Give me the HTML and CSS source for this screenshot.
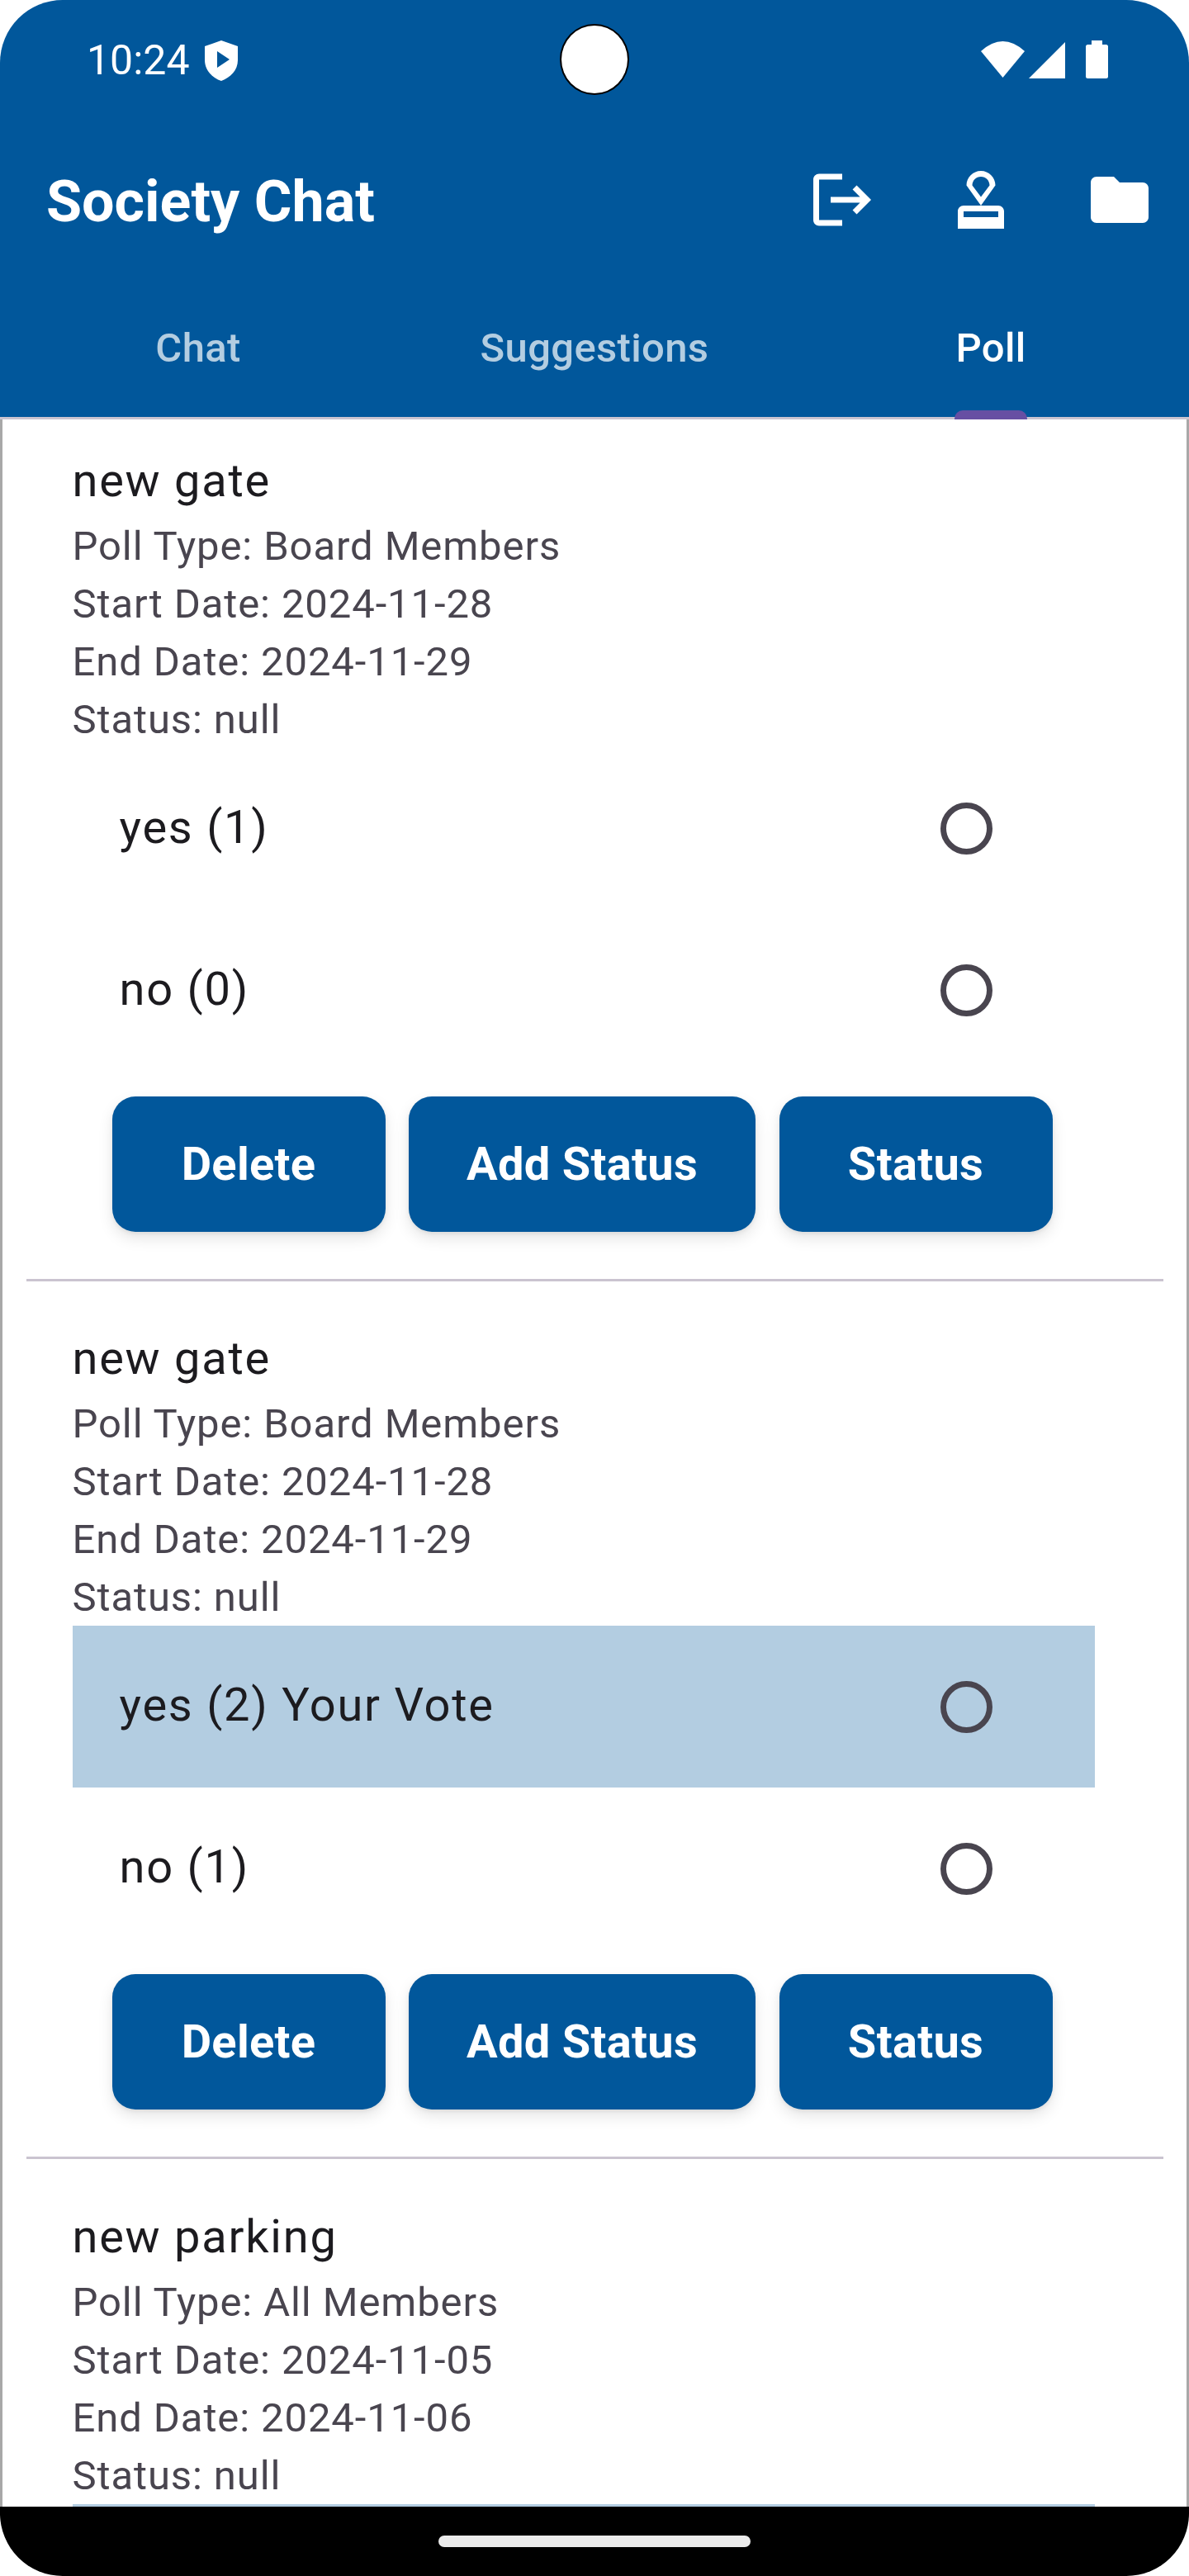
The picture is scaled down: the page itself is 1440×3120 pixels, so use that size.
FILE: index.html
```html
<!DOCTYPE html>
<html lang="en">
<head>
<meta charset="utf-8">
<title>Society Chat</title>
<link rel="stylesheet" href="styles.css">
</head>
<body>
<div class="screen">
  <header class="header">
    <div class="status">
      <div class="status-left">
        <span class="time">10:24</span>
        <svg class="shield" viewBox="0 0 40 49"><path fill-rule="evenodd" d="M20 0L40 7V24C40 36 31 45 20 49C9 45 0 36 0 24V7ZM15 13V33L30 23Z"/></svg>
      </div>
      <div class="status-right">
        <svg class="wifi" viewBox="0 0 53 44"><path d="M0 12Q26.5-12 53 12L26.5 44Z"/></svg>
        <svg class="signal" viewBox="0 0 44 44"><path d="M44 0V44H0Z"/></svg>
        <svg class="battery" viewBox="0 0 27 46"><path d="M7 0H20V5H24.5Q27 5 27 7.500V43.500Q27 46 24.500 46H2.500Q0 46 0 43.500V7.500Q0 5 2.500 5H7Z"/></svg>
      </div>
      <div class="camera"></div>
    </div>
    <div class="appbar">
      <h1 class="title">Society Chat</h1>
      <div class="actions">
        <span class="action"><svg class="icon" viewBox="0 0 24 24"><path d="M17 7l-1.410 1.410L18.170 11H8v2h10.170l-2.580 2.580L17 17l5-5zM4 5h8V3H4c-1.100 0-2 .9-2 2v14c0 1.100.9 2 2 2h8v-2H4V5z"/></svg></span>
        <span class="action"><svg class="icon" viewBox="0 0 24 24"><path d="M4 16v6h16v-6c0-1.100-.9-2-2-2H6c-1.100 0-2 .9-2 2zm14 2H6v-2h12v2zM12 2C9.240 2 7 4.240 7 7l5 7 5-7c0-2.760-2.240-5-5-5zm0 9L9 7c0-1.660 1.340-3 3-3s3 1.340 3 3l-3 4z"/></svg></span>
        <span class="action"><svg class="icon" viewBox="0 0 24 24"><path d="M10 4H4c-1.100 0-1.990.9-1.990 2L2 18c0 1.100.9 2 2 2h16c1.100 0 2-.9 2-2V8c0-1.100-.9-2-2-2h-8l-2-2z"/></svg></span>
      </div>
    </div>
    <nav class="tabs">
      <div class="tab">Chat</div>
      <div class="tab">Suggestions</div>
      <div class="tab tab-active"><span class="tab-label">Poll<span class="indicator"></span></span></div>
    </nav>
  </header>

  <main class="list">
    <section class="poll">
      <h2 class="poll-title">new gate</h2>
      <p class="meta">Poll Type: Board Members</p>
      <p class="meta">Start Date: 2024-11-28</p>
      <p class="meta">End Date: 2024-11-29</p>
      <p class="meta">Status: null</p>
      <div class="option"><span class="option-label">yes (1)</span><span class="radio"></span></div>
      <div class="option"><span class="option-label">no (0)</span><span class="radio"></span></div>
      <div class="buttons">
        <button class="btn">Delete</button>
        <button class="btn btn-tight">Add Status</button>
        <button class="btn">Status</button>
      </div>
    </section>

    <section class="poll">
      <h2 class="poll-title">new gate</h2>
      <p class="meta">Poll Type: Board Members</p>
      <p class="meta">Start Date: 2024-11-28</p>
      <p class="meta">End Date: 2024-11-29</p>
      <p class="meta">Status: null</p>
      <div class="option option-voted"><span class="option-label">yes (2) Your Vote</span><span class="radio"></span></div>
      <div class="option"><span class="option-label">no (1)</span><span class="radio"></span></div>
      <div class="buttons">
        <button class="btn">Delete</button>
        <button class="btn btn-tight">Add Status</button>
        <button class="btn">Status</button>
      </div>
    </section>

    <section class="poll">
      <h2 class="poll-title">new parking</h2>
      <p class="meta">Poll Type: All Members</p>
      <p class="meta">Start Date: 2024-11-05</p>
      <p class="meta">End Date: 2024-11-06</p>
      <p class="meta">Status: null</p>
      <div class="option option-voted"></div>
    </section>
  </main>

  <footer class="navbar"><span class="pill"></span></footer>
</div>
</body>
</html>
```

FILE: styles.css
```css
* { box-sizing: border-box; }
html, body { margin: 0; padding: 0; background: #fff; }
body { width: 1440px; height: 3120px; overflow: hidden; font-family: Roboto, "Liberation Sans", sans-serif; }

.screen {
  width: 1440px; height: 3120px; border-radius: 76px; overflow: hidden;
  display: flex; flex-direction: column; background: #fff;
}

.header { flex: none; background: #01579b; color: #fff; }

.status {
  position: relative; height: 130px; padding: 49px 98px 0 105px;
  display: flex; justify-content: space-between; align-items: flex-start;
}
.status-left { display: flex; align-items: flex-start; gap: 18px; }
.time { font-size: 50px; line-height: 44px; height: 44px; padding-top: 2px; }
.status-right { display: flex; align-items: flex-start; }
.status svg { display: block; fill: #fff; }
.shield { width: 40px; height: 49px; }
.wifi { width: 53px; height: 44px; margin-top: 1px; }
.signal { width: 44px; height: 44px; margin: 2px 0 0 5px; }
.battery { width: 27px; height: 46px; margin-left: 25px; }
.camera {
  position: absolute; left: 678px; top: 29px; width: 84px; height: 86px;
  border-radius: 50%; background: #fff; border: 2px solid #000;
}

.appbar { display: flex; align-items: center; height: 224px; }
.title { flex: 1; margin: 0; padding: 3px 0 0 56px; font-size: 70px; font-weight: 700; line-height: 1; }
.actions { display: flex; }
.action { width: 168px; height: 168px; display: flex; align-items: center; justify-content: center; }
.icon { width: 84px; height: 84px; fill: #fff; display: block; }

.tabs { display: flex; height: 153.5px; border-bottom: 3.5px solid #cac4d0; }
.tab {
  flex: 1; display: flex; align-items: flex-start; justify-content: center;
  padding-top: 39px; font-size: 49px; line-height: 58px; font-weight: 500; letter-spacing: .35px; color: #b3cde1;
}
.tab-active { color: #fff; }
.tab-label { position: relative; height: 100%; }
.indicator {
  position: absolute; left: -1px; right: -1px; top: 104px; height: 10.5px;
  background: #674fa3; border-radius: 10px 10px 0 0;
}

.list {
  flex: 1; min-height: 0; overflow: hidden;
  border-left: 3.5px solid #a8a8a8; border-right: 3.5px solid #a8a8a8;
}

.poll {
  margin: 0 28.5px 19.5px; padding: 32px 83px 57px 56px;
  border-bottom: 3.5px solid #cac4d0;
}
.poll-title {
  margin: 0 0 3px; font-size: 56px; line-height: 84px; font-weight: 400;
  letter-spacing: 1.75px; color: #1c1b1f;
}
.meta {
  margin: 0; font-size: 49px; line-height: 70px; letter-spacing: .9px; color: #49454f;
}
.meta:last-of-type { margin-bottom: -1px; }

.option { height: 196px; display: flex; align-items: center; justify-content: space-between; padding: 0 123.5px 0 57px; }
.option-voted { background: #b3cde1; }
.option-label { font-size: 56px; line-height: 84px; letter-spacing: 1.75px; color: #1c1b1f; padding-bottom: 4px; }
.radio { width: 63px; height: 63px; border-radius: 50%; border: 7px solid #49454f; }

.buttons { display: flex; justify-content: center; gap: 28.5px; margin-top: 30px; padding-right: 3px; }
.btn {
  height: 164px; width: 331px; padding: 0; border: 0; border-radius: 28px; background: #01579b; color: #fff;
  font-family: Roboto, "Liberation Sans", sans-serif; font-size: 56px; font-weight: 700; letter-spacing: .3px;
  box-shadow: 0 8px 18px rgba(0,0,0,.10), 0 2px 5px rgba(0,0,0,.07);
}
.btn-tight { width: 420px; }

.navbar { flex: none; height: 84px; background: #000; display: flex; justify-content: center; padding-top: 35px; }
.pill { width: 378px; height: 14px; border-radius: 7px; background: #ebebeb; }
```
